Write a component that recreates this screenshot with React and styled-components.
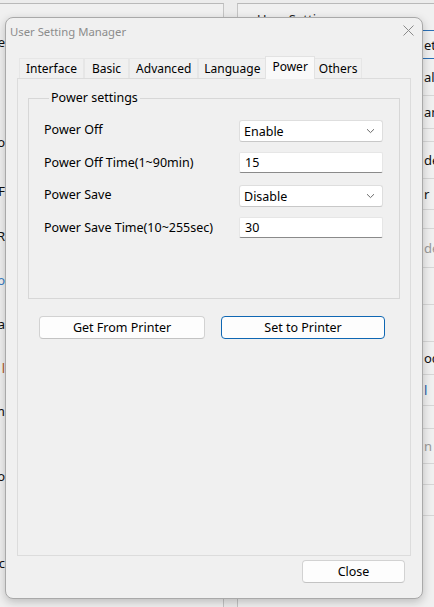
import React from 'react'
import styled, { createGlobalStyle } from 'styled-components'

const GlobalStyle = createGlobalStyle`
	html, body {
		margin: 0;
		padding: 0;
		background: #f0f0f0;
	}
	body {
		font-family: "Noto Sans", "Open Sans", sans-serif;
		font-size: 12px;
		color: #000;
	}
`

const Page = styled.div`
	position: relative;
	width: 434px;
	height: 607px;
	overflow: hidden;
	background: #ececec;
`

// windows lying behind the dialog
const Backdrop = styled.div`
	display: flex;
	height: 100%;
	gap: 13px;
`

const BackPanel = styled.div`
	flex: ${p => p.$flex};
	display: flex;
	flex-direction: column;
	border-top: 1px solid #b9b9b9;
	margin-top: 3px;
	background: #f0f0f0;
	border-left: ${p => p.$side ? '1px solid #c4c4c4' : 'none'};
	border-right: ${p => p.$side ? 'none' : '1px solid #c4c4c4'};
`

const BackTitle = styled.div`
	height: 20px;
	padding: 6px 0 0 19px;
	font-size: 13px;
	color: #222;
`

const BackRow = styled.div`
	height: ${p => p.$h}px;
	display: flex;
	align-items: center;
	padding-left: 186px;
	color: ${p => p.$color || '#111'};
	font-size: 13px;
	border-top: ${p => p.$top ? `1px solid ${p.$top}` : 'none'};
	border-bottom: ${p => p.$line ? `1px solid ${p.$line}` : 'none'};
	white-space: nowrap;
	overflow: hidden;
`

const LeftStrip = styled.div`
	width: 5px;
	overflow: hidden;
	display: flex;
	flex-direction: column;
	align-items: flex-end;
`

const StripText = styled.div`
	height: ${p => p.$h}px;
	display: flex;
	align-items: center;
	font-size: 13px;
	color: ${p => p.$color || '#111'};
	white-space: nowrap;
`

const Dialog = styled.div`
	position: absolute;
	left: 5px;
	top: 17px;
	width: 416px;
	height: 580px;
	background: #f0f0f0;
	border: 1px solid #a9a9a9;
	border-radius: 8px;
	box-shadow: 0 3px 10px rgba(0, 0, 0, 0.22);
	display: flex;
	flex-direction: column;
`

const TitleBar = styled.div`
	height: 27px;
	display: flex;
	align-items: center;
	justify-content: space-between;
	padding: 0 8px 0 4px;
	color: #8c8c8c;
	font-size: 11.3px;
`

const CloseX = styled.svg`
	width: 11px;
	height: 11px;
	margin-top: -3px;
`

const Body = styled.div`
	flex: 1;
	display: flex;
	flex-direction: column;
	padding: 10px 11px 15px 11px;
`

const TabBar = styled.div`
	display: flex;
	align-items: flex-end;
	padding-left: 2px;
	height: 23px;
`

const Tab = styled.div`
	height: ${p => p.$active ? '23px' : '20px'};
	padding: 0 ${p => p.$pad}px;
	display: flex;
	align-items: center;
	box-sizing: border-box;
	background: ${p => p.$active ? '#f9f9f9' : '#f0f0f0'};
	border: 1px solid ${p => p.$active ? '#e2e2e2' : '#e6e6e6'};
	border-bottom: none;
	margin-left: ${p => p.$active ? '-1px' : '0'};
	margin-right: ${p => p.$active ? '-1px' : '0'};
	position: relative;
	z-index: ${p => p.$active ? 1 : 0};
	padding-bottom: ${p => p.$active ? '3px' : '0'};
	margin-bottom: ${p => p.$active ? '-1px' : '0'};
`

const TabPanel = styled.div`
	flex: 1;
	border: 1px solid #dcdcdc;
	background: #f0f0f0;
	padding: 12px 10px 0 10px;
	display: flex;
	flex-direction: column;
`

const Group = styled.fieldset`
	margin: 0;
	height: 208px;
	box-sizing: border-box;
	border: 1px solid #d7d7d7;
	border-radius: 0;
	padding: 15px 16px 0 15px;
	display: flex;
	flex-direction: column;
	gap: 10px;
	legend {
		padding: 0 2px;
		margin-left: 5px;
		font-size: 12.5px;
		line-height: 14px;
	}
`

const Row = styled.div`
	display: flex;
	align-items: center;
	justify-content: space-between;
	height: ${p => p.$h}px;
	margin-top: ${p => p.$gap || 0}px;
`

const Label = styled.span`
	font-size: 12.5px;
	margin-top: ${p => p.$up ? '-3px' : '0'};
`

const Combo = styled.div`
	width: 144px;
	height: 22px;
	box-sizing: border-box;
	background: #fff;
	border: 1px solid #dedede;
	border-bottom-color: #c8c8c8;
	border-radius: 3px;
	display: flex;
	align-items: center;
	justify-content: space-between;
	padding: 0 7px 0 4px;
	font-size: 12.5px;
`

const Field = styled.div`
	width: 144px;
	height: 21px;
	box-sizing: border-box;
	background: #fff;
	border: 1px solid #e6e6e6;
	border-bottom: 1px solid #8a8a8a;
	border-radius: 2px;
	display: flex;
	align-items: center;
	padding-left: 5px;
	font-size: 12.5px;
`

const Chevron = styled.svg`
	width: 9px;
	height: 6px;
`

const ButtonRow = styled.div`
	display: flex;
	gap: 16px;
	padding-left: 11px;
	margin-top: 17px;
`

const Button = styled.div`
	width: ${p => p.$w}px;
	height: 23px;
	box-sizing: border-box;
	background: #fdfdfd;
	border: 1px solid ${p => p.$focus ? '#0f67b3' : '#d2d2d2'};
	border-bottom-color: ${p => p.$focus ? '#0f67b3' : '#c3c3c3'};
	border-radius: 4px;
	display: flex;
	align-items: center;
	justify-content: center;
	font-size: 12.5px;
`

const Footer = styled.div`
	display: flex;
	justify-content: flex-end;
	padding: 4px 6px 0 0;
`

const leftStrip = [
	{ h: 24, t: '' }, { h: 30, t: 'ne' }, { h: 60, t: '' }, { h: 56, t: 'o' }, { h: 46, t: 'F' },
	{ h: 46, t: 'R' }, { h: 46, t: 'o', c: '#3a7fc4' }, { h: 44, t: 'a' }, { h: 46, t: 'l', c: '#b35b1c' },
	{ h: 44, t: 'm' }, { h: 90, t: 'o' }, { h: 90, t: 'c' },
]

const rightRows = [
	{ h: 27, t: 'ett', top: '#2a6fb5', line: '#2a6fb5' },
	{ h: 36, t: 'ali', line: '#d6d6d6' }, { h: 32, t: 'an', line: '#d6d6d6' }, { h: 12, t: '', line: '#d6d6d6' },
	{ h: 36, t: 'de', line: '#d6d6d6' }, { h: 30, t: 'r', line: '#d6d6d6' }, { h: 18, t: '', line: '#d6d6d6' },
	{ h: 38, t: 'de', c: '#9a9a9a', line: '#d6d6d6' }, { h: 36, t: '', line: '#d6d6d6' },
	{ h: 36, t: '', line: '#d6d6d6' }, { h: 32, t: 'oc', line: '#d6d6d6' }, { h: 30, t: 'l', c: '#1f5ea8', line: '#d6d6d6' },
	{ h: 22, t: '', line: '#d6d6d6' }, { h: 34, t: 'n', c: '#9a9a9a', line: '#d6d6d6' },
	{ h: 20, t: '', line: '#d6d6d6' }, { h: 30, t: '', line: '#d6d6d6' },
]

const ArrowDown = () => (
	<Chevron viewBox='0 0 9 6'>
		<path d='M1 1.2 L4.5 4.6 L8 1.2' fill='none' stroke='#6b6b6b' strokeWidth='1' />
	</Chevron>
)

const tabs = [
	{ name: 'Interface', pad: 6 },
	{ name: 'Basic', pad: 7 },
	{ name: 'Advanced', pad: 6 },
	{ name: 'Language', pad: 5 },
	{ name: 'Power', pad: 6, active: true },
	{ name: 'Others', pad: 4 },
]

export default function App() {
	return (
		<>
			<GlobalStyle />
			<Page>
				<Backdrop>
					<BackPanel $flex='0 0 223px'>
						<LeftStrip>
							{leftStrip.map((r, i) => (
								<StripText key={i} $h={r.h} $color={r.c}>{r.t}</StripText>
							))}
						</LeftStrip>
					</BackPanel>
					<BackPanel $flex='1' $side>
						<BackTitle>User Setting</BackTitle>
						{rightRows.map((r, i) => (
							<BackRow key={i} $h={r.h} $top={r.top} $line={r.line} $color={r.c}>{r.t}</BackRow>
						))}
					</BackPanel>
				</Backdrop>

				<Dialog>
					<TitleBar>
						<span>User Setting Manager</span>
						<CloseX viewBox='0 0 11 11'>
							<path d='M0.5 0.5 L10.5 10.5 M10.5 0.5 L0.5 10.5' stroke='#8a8a8a' strokeWidth='1' />
						</CloseX>
					</TitleBar>
					<Body>
						<TabBar>
							{tabs.map(t => (
								<Tab key={t.name} $pad={t.pad} $active={t.active}>{t.name}</Tab>
							))}
						</TabBar>
						<TabPanel>
							<Group>
								<legend>Power settings</legend>
								<Row $h={22}>
									<Label $up>Power Off</Label>
									<Combo>Enable<ArrowDown /></Combo>
								</Row>
								<Row $h={21}>
									<Label>Power Off Time(1~90min)</Label>
									<Field>15</Field>
								</Row>
								<Row $h={22} $gap={2}>
									<Label $up>Power Save</Label>
									<Combo>Disable<ArrowDown /></Combo>
								</Row>
								<Row $h={21}>
									<Label>Power Save Time(10~255sec)</Label>
									<Field>30</Field>
								</Row>
							</Group>
							<ButtonRow>
								<Button $w={166}>Get From Printer</Button>
								<Button $w={164} $focus>Set to Printer</Button>
							</ButtonRow>
						</TabPanel>
						<Footer>
							<Button $w={103}>Close</Button>
						</Footer>
					</Body>
				</Dialog>
			</Page>
		</>
	)
}
